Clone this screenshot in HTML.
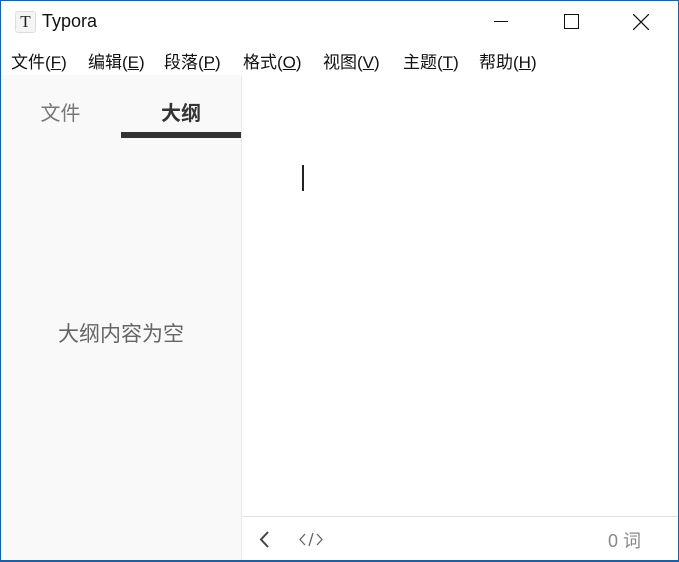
<!DOCTYPE html><html><head><meta charset="utf-8"><style>
*{margin:0;padding:0;box-sizing:border-box}
body{width:679px;height:562px;overflow:hidden;background:#fff;font-family:"Liberation Sans","Noto Sans CJK SC",sans-serif;position:relative}
.frame{position:absolute;inset:0;border:1px solid #1b5fa8;border-bottom-width:2px}
.a{position:absolute}
.menu span{position:absolute;top:48px;font-size:17px;color:#111}
</style></head><body>
<div class="a" style="left:15px;top:11px;width:21px;height:22px;background:#f4f4f4;border:1px solid #ddd;border-radius:3px;font-family:'Liberation Serif',serif;font-size:17px;text-align:center;line-height:20px;color:#222">T</div>
<div class="a" style="left:42px;top:11px;font-size:18px;color:#111">Typora</div>
<div class="a" style="left:494px;top:21px;width:14px;height:1px;background:#111"></div>
<div class="a" style="left:564px;top:14px;width:15px;height:15px;border:1px solid #111"></div>
<svg class="a" style="left:633px;top:14px" width="16" height="16"><path d="M0 0L16 16M16 0L0 16" stroke="#111" stroke-width="1.2"/></svg>
<div class="menu">
<span style="left:11px">文件(<u>F</u>)</span><span style="left:88px">编辑(<u>E</u>)</span><span style="left:164px">段落(<u>P</u>)</span><span style="left:243px">格式(<u>O</u>)</span><span style="left:323px">视图(<u>V</u>)</span><span style="left:403px">主题(<u>T</u>)</span><span style="left:479px">帮助(<u>H</u>)</span>
</div>
<div class="a" style="left:1px;top:75px;width:241px;height:486px;background:#f9f9f9;border-right:1px solid #eaeaea"></div>
<div class="a" style="left:0;top:97px;width:121px;text-align:center;font-size:20px;color:#777">文件</div>
<div class="a" style="left:121px;top:97px;width:120px;text-align:center;font-size:20px;font-weight:bold;color:#333">大纲</div>
<div class="a" style="left:121px;top:132px;width:120px;height:6px;background:#333"></div>
<div class="a" style="left:0;top:318px;width:242px;text-align:center;font-size:21px;color:#666">大纲内容为空</div>
<div class="a" style="left:302px;top:165px;width:2px;height:26px;background:#222"></div>
<div class="a" style="left:242px;top:516px;width:436px;height:1px;background:#e0e0e0"></div>
<svg class="a" style="left:258px;top:531px" width="12" height="17"><path d="M10 1L3 8.5L10 16" stroke="#444" stroke-width="2" fill="none"/></svg>
<svg class="a" style="left:299px;top:531px" width="24" height="17"><path d="M6 3L1 8.5L6 14M18 3L23 8.5L18 14M14 2L10 15" stroke="#666" stroke-width="1.3" fill="none"/></svg>
<div class="a" style="left:608px;top:527px;font-size:18px;color:#888">0 词</div>
<div class="frame"></div>
</body></html>
